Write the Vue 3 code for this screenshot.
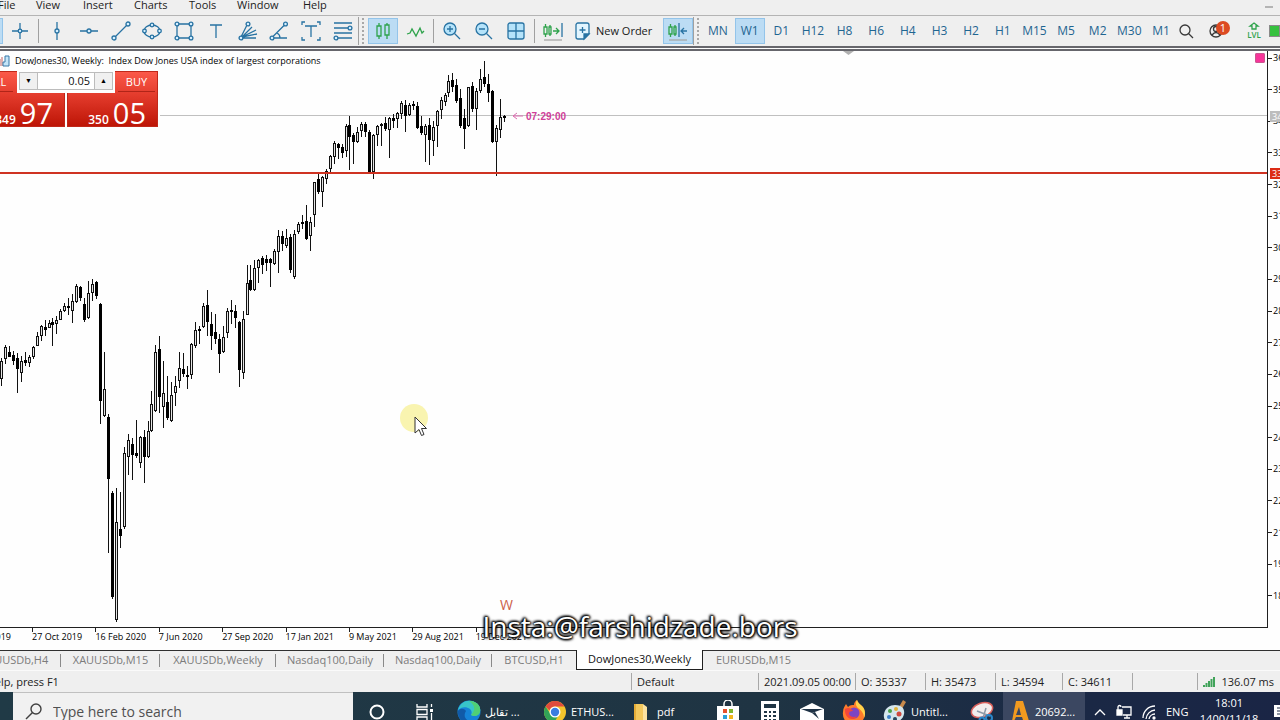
<template>
  <div class="terminal">
    <nav class="menubar">
      <button class="menu-item" v-for="item in menu" :key="item.name" :style="{ width: item.width + 'px' }">{{ item.name }}</button>
      <button class="minimize" aria-label="Minimize"></button>
    </nav>

    <div class="toolbar">
      <div class="group group-pointer">
        <button class="tool active" aria-label="Cursor"></button>
        <button class="tool" aria-label="Crosshair">
          <svg width="20" height="20" viewBox="0 0 20 20"><path d="M10 2v16M2 10h16" /><circle cx="10" cy="10" r="1.8" /></svg>
        </button>
      </div>
      <div class="sep"></div>
      <div class="group group-objects">
        <button class="tool" aria-label="Vertical line">
          <svg width="20" height="20" viewBox="0 0 20 20"><path d="M10 1v7M10 12v7" /><circle cx="10" cy="10" r="2" /></svg>
        </button>
        <button class="tool" aria-label="Horizontal line">
          <svg width="20" height="20" viewBox="0 0 20 20"><path d="M1 10h7M12 10h7" /><circle cx="10" cy="10" r="2" /></svg>
        </button>
        <button class="tool" aria-label="Trend line">
          <svg width="20" height="20" viewBox="0 0 20 20"><path d="M4.5 15.5l11-11" /><circle cx="3" cy="17" r="2" /><circle cx="17" cy="3" r="2" /></svg>
        </button>
        <button class="tool" aria-label="Ellipse">
          <svg width="20" height="20" viewBox="0 0 20 20"><ellipse cx="10" cy="10" rx="8" ry="6" /><circle cx="10" cy="4" r="1.8" /><circle cx="10" cy="16" r="1.8" /><circle cx="2.5" cy="10" r="1.8" /><circle cx="17.5" cy="10" r="1.8" /></svg>
        </button>
        <button class="tool" aria-label="Rectangle">
          <svg width="20" height="20" viewBox="0 0 20 20"><path d="M3 3h14v14H3z" /><circle cx="3" cy="3" r="1.9" /><circle cx="17" cy="3" r="1.9" /><circle cx="3" cy="17" r="1.9" /><circle cx="17" cy="17" r="1.9" /></svg>
        </button>
        <button class="tool" aria-label="Text">
          <svg width="20" height="20" viewBox="0 0 20 20"><path d="M4 4h12M10 4v13" /></svg>
        </button>
        <button class="tool" aria-label="Gann fan">
          <svg width="20" height="20" viewBox="0 0 20 20"><path d="M3 16L9 4M4 16L14 6M4 16L18 9M4 16l15-3M4 17h14" /><circle cx="10" cy="3" r="1.9" /><circle cx="3" cy="17" r="1.9" /></svg>
        </button>
        <button class="tool" aria-label="Angle">
          <svg width="20" height="20" viewBox="0 0 20 20"><path d="M4 15.5L15 4.5M5 17h13M8 12q3 1.5 3 5" /><circle cx="16.5" cy="3" r="1.9" /><circle cx="3" cy="17" r="1.9" /></svg>
        </button>
        <button class="tool" aria-label="Text label">
          <svg width="20" height="20" viewBox="0 0 20 20"><path d="M4 5h12M10 5v11M1 4V1h3M16 1h3v3M1 16v3h3M16 19h3v-3" /></svg>
        </button>
        <button class="tool" aria-label="Fibonacci">
          <svg width="20" height="20" viewBox="0 0 20 20"><path d="M1 2h18M1 7h14M1 12h18M5 17h14" /><circle cx="17" cy="7" r="1.9" /><circle cx="3" cy="17" r="1.9" /></svg>
        </button>
      </div>
      <div class="divider"></div>
      <div class="group group-pair">
        <button class="tool active green" aria-label="Candlesticks">
          <svg width="20" height="20" viewBox="0 0 20 20"><path d="M4 5h4v10H4zM6 2v3M6 15v3M12 4h4v10h-4zM14 2v2M14 14v4" /></svg>
        </button>
        <button class="tool green" aria-label="Line chart">
          <svg width="20" height="20" viewBox="0 0 20 20"><path d="M2 13l3-1 2-4 4 7 4-8 2 5 2-2" /></svg>
        </button>
      </div>
      <div class="sep"></div>
      <div class="group group-zoom">
        <button class="tool" aria-label="Zoom in">
          <svg width="20" height="20" viewBox="0 0 20 20"><circle cx="8" cy="8" r="6" class="lens" /><path d="M12.5 12.5L18 18M5 8h6M8 5v6" /></svg>
        </button>
        <button class="tool" aria-label="Zoom out">
          <svg width="20" height="20" viewBox="0 0 20 20"><circle cx="8" cy="8" r="6" class="lens" /><path d="M12.5 12.5L18 18M5 8h6" /></svg>
        </button>
        <button class="tool" aria-label="Tile windows">
          <svg width="20" height="20" viewBox="0 0 20 20"><rect x="2" y="2" width="16" height="16" rx="2" class="lens" /><path d="M10 2v16M2 10h16" /></svg>
        </button>
      </div>
      <div class="sep"></div>
      <button class="tool green" aria-label="Auto scroll">
        <svg width="20" height="20" viewBox="0 0 20 20"><path d="M1 6h3v7H1zM2.5 3v3M2.5 13v3M6 6h2v7H6zM7 4v2M7 13v2M10 10h6M13 7l3 3-3 3" /><path class="blue" d="M19 2v14" /><path class="grey" d="M1 19h18" /></svg>
      </button>
      <button class="new-order">
        <svg width="20" height="20" viewBox="0 0 20 20"><path class="paper" d="M5 2h9a2 2 0 0 1 2 2v9l-5 5H5a2 2 0 0 1-2-2V4a2 2 0 0 1 2-2z" /><path class="fold" d="M11 18v-5h5z" /><path d="M9.5 6v6M6.5 9h6" /></svg>
        New Order
      </button>
      <button class="tool active green" aria-label="Chart shift">
        <svg width="20" height="20" viewBox="0 0 20 20"><path d="M1 6h3v7H1zM2.5 3v3M2.5 13v3M6 6h2v7H6zM7 4v2M7 13v2" /><path class="blue" d="M11 2v14M13 10h6M16 7l-3 3 3 3" /><path class="grey" d="M1 19h18" /></svg>
      </button>
      <div class="divider"></div>
      <div class="group group-frames">
        <button class="tool frame" v-for="tf in frames" :key="tf" :class="{ active: tf === frame }" @click="frame = tf">{{ tf }}</button>
      </div>
      <div class="extras">
        <button class="extra dark" aria-label="Search">
          <svg width="20" height="20" viewBox="0 0 20 20"><circle cx="9" cy="9" r="5" /><path d="M12.5 12.5L17 17" /></svg>
        </button>
        <button class="extra dark account" aria-label="Account">
          <svg width="20" height="20" viewBox="0 0 20 20"><circle cx="8" cy="10" r="6" /><circle cx="8" cy="8" r="2.5" /><path d="M4 14q4-5 8 0" /></svg>
          <span class="badge">1</span>
        </button>
        <button class="extra lvl" aria-label="Level">
          <svg width="14" height="8" viewBox="0 0 14 8"><path d="M7 1l4 3H9v3H5V4H3z" /></svg>
          <span>LVL</span>
        </button>
        <span class="battery"></span>
      </div>
    </div>

    <div class="workspace">
      <div class="plot">
        <svg class="chart" width="100%" height="100%">
          <line x1="160" y1="64.5" x2="100%" y2="64.5" class="bid" />
          <g v-for="(c, i) in candles" :key="i">
            <line :x1="candleX(i)" :x2="candleX(i)" :y1="c[0] - 51" :y2="c[3] - 51" class="wick" />
            <rect :x="candleX(i) - 1" :y="c[1] - 51 + 0.5" width="2" :height="Math.max(c[2] - c[1] - 1, 1)" :class="c[4] ? 'bear' : 'bull'" />
          </g>
          <line x1="0" y1="122" x2="100%" y2="122" class="level" />
          <path d="M513 65h10M517 62l-4 3 4 3" class="arrow" />
          <text x="526" y="69" class="timer">07:29:00</text>
          <text x="500" y="559" class="period">W</text>
          <path d="M843 0h11l-5.5 4z" class="shift-mark" />
          <circle cx="414" cy="367" r="14" class="halo" />
          <path d="M415 366v16l4-3.5 2.5 6 2.5-1-2.5-6h5z" class="pointer" />
        </svg>
        <div class="caption">
          <svg width="12" height="12" viewBox="0 0 12 12"><path d="M-3 11V4h4v7zM3 11V2" fill="#f8e0e0" stroke="#c06060" /><path d="M4 11V7h2V1h4v10z" fill="#c4e5f8" stroke="#3878a8" /></svg>
          DowJones30, Weekly:&nbsp; Index Dow Jones USA index of largest corporations
        </div>
        <span class="marker"></span>
        <div class="trade">
          <button class="deal sell">
            <span class="side">SELL</span>
            <span class="quote"><small>349</small>97</span>
          </button>
          <button class="deal">
            <span class="side">BUY</span>
            <span class="quote"><small>350</small>05</span>
          </button>
          <div class="stepper">
            <button class="step" aria-label="Decrease volume" @click="stepVolume(-1)">▼</button>
            <input v-model="volume" aria-label="Volume">
            <button class="step" aria-label="Increase volume" @click="stepVolume(1)">▲</button>
          </div>
        </div>
      </div>
      <div class="prices">
        <span class="price" v-for="p in prices" :key="p">{{ p }}</span>
        <span class="price-tag tag-bid">34</span>
        <span class="price-tag tag-level">33</span>
      </div>
    </div>

    <div class="dates">
      <span class="first-date">2019</span>
      <div class="date-row">
        <span class="date" v-for="d in dates" :key="d">{{ d }}</span>
      </div>
      <div class="watermark">Insta:@farshidzade.bors</div>
    </div>

    <div class="tabs">
      <button class="tab" v-for="(tab, i) in tabs" :key="i" :class="{ current: tab.name === current, plain: tab.plain }"
        :style="{ width: tab.width + 'px' }" @click="current = tab.name">{{ tab.name }}</button>
    </div>

    <footer class="status">
      <span class="help">For Help, press F1</span>
      <span class="cell" v-for="(cell, i) in cells" :key="i" :style="{ width: cell.width + 'px' }">{{ cell.text }}</span>
      <span class="cell ping">
        <svg width="12" height="10" viewBox="0 0 12 10"><path d="M0 8h2v2H0zM2.5 6h2v4h-2zM5 4h2v6H5zM7.5 2h2v8h-2zM10 0h2v10h-2z" /></svg>
        136.07 ms
      </span>
    </footer>

    <div class="taskbar">
      <button class="start" aria-label="Start"></button>
      <label class="search">
        <svg width="20" height="20" viewBox="0 0 20 20"><circle cx="12" cy="7" r="5" /><path d="M8.5 10.5L2 17" /></svg>
        <input placeholder="Type here to search" aria-label="Type here to search">
      </label>
      <button class="task mid" aria-label="Cortana">
        <svg width="22" height="22" viewBox="0 0 22 22"><circle cx="11" cy="11" r="6.5" fill="none" stroke="#fff" stroke-width="2" /></svg>
      </button>
      <button class="task mid" aria-label="Task view">
        <svg width="22" height="22" viewBox="0 0 22 22"><path d="M3 3v3h10V3M3 19v-3h10v3M3 8.5h10v5H3zM17.5 3v3M17.5 12v7" fill="none" stroke="#fff" stroke-width="1.3" /><path d="M16 8h3v3h-3z" fill="#fff" /></svg>
      </button>
      <button class="task wide">
        <svg width="24" height="24" viewBox="0 0 24 24"><circle cx="12" cy="12" r="11.5" fill="#1683d8" /><path d="M1 10C3 3 9 0 14 1c7 1 10 6 9 11-1 4-6 5-9 3 1-2 1-4-1-6-4-3-9-2-12 1z" fill="#38c5c9" /><path d="M14 1c7 1 10 6 9 11-1 4-6 5-9 3 5-5 4-10-2-14z" fill="#50cf75" /><path d="M9 11c-3 4-1 9 5 11-8 2-14-4-13-11 2-3 6-3 8 0z" fill="#115aa8" /></svg>
        <span dir="ltr">تقابل ...</span>
      </button>
      <button class="task wide">
        <svg width="24" height="24" viewBox="0 0 24 24"><circle cx="12" cy="12" r="11" fill="#f2c42c" /><path d="M2.5 6.5A11 11 0 0 1 21.5 6.5H12a6 6 0 0 0-5.5 4z" fill="#df4b3c" /><path d="M2.5 6.5A11 11 0 0 0 11 23l4-7-6 0z" fill="#31a357" /><circle cx="12" cy="12" r="5.5" fill="#fff" /><circle cx="12" cy="12" r="4.2" fill="#3b7de0" /></svg>
        <span>ETHUS...</span>
      </button>
      <button class="task wide">
        <svg width="24" height="24" viewBox="0 0 24 24"><path d="M5 4h9v3h4v15H5z" fill="#f4c95d" /><path d="M14 4l4 3v15h-4z" fill="#fbe2a0" /><path d="M5 4h2v18H5z" fill="#e5ad38" /></svg>
        <span>pdf</span>
      </button>
      <button class="task" aria-label="Store">
        <svg width="24" height="24" viewBox="0 0 24 24"><path d="M8 6V4a4 4 0 0 1 8 0v2" fill="none" stroke="#fff" stroke-width="1.5" /><path d="M1 6h22v17H1z" fill="#fff" /><path d="M7 9h4v4H7z" fill="#e6512c" /><path d="M13 9h4v4h-4z" fill="#7db72f" /><path d="M7 15h4v4H7z" fill="#2a9fd8" /><path d="M13 15h4v4h-4z" fill="#f3b61f" /></svg>
      </button>
      <button class="task" aria-label="Calculator">
        <svg width="24" height="24" viewBox="0 0 24 24"><path d="M3 1h18v22H3z" fill="#fff" /><path d="M6 4h12v4H6zM6 11h3v2H6zM11 11h2v2h-2zM15 11h3v2h-3zM6 15h3v2H6zM11 15h2v2h-2zM15 15h3v2h-3zM6 19h3v2H6zM11 19h2v2h-2zM15 19h3v2h-3z" fill="#1f3444" /></svg>
      </button>
      <button class="task" aria-label="Mail">
        <svg width="24" height="24" viewBox="0 0 24 24"><path d="M0 9l12-6 12 6v13H0z" fill="#fff" /><path d="M1 9h22l-11 4z" fill="#1e3245" /><path d="M12 13l7 6-4-7z" fill="#1e3245" /></svg>
      </button>
      <button class="task" aria-label="Firefox">
        <svg width="24" height="24" viewBox="0 0 24 24"><path d="M1 12C1 8 3 6 4 4l2 3c2-2 4-2 6-2 0-2 1-4 3-5 1 3 3 4 5 6 3 3 4 8 2 12a11 11 0 0 1-21-6z" fill="#ff7b2b" /><path d="M15 0c1 3 3 4 5 6 3 3 4 8 2 12 0-5-3-8-6-10-2-2-3-5-1-8z" fill="#ffd34a" /><circle cx="12" cy="13" r="5.5" fill="#7c45c4" /><path d="M3 9c3-2 6-1 8 2-3 0-4 1-4 3 1 3 5 4 8 2-3 6-13 3-12-7z" fill="#f2463c" /></svg>
      </button>
      <button class="task wide">
        <svg width="24" height="24" viewBox="0 0 24 24"><path d="M13 12l7-12 3 2-7 12z" fill="#c98a4b" /><path d="M12 5c7 0 10 4 9 9-1 6-7 9-13 9-5 0-8-4-7-9 1-6 6-9 11-9z" fill="#d5e6ec" /><circle cx="7" cy="11" r="2" fill="#49a14a" /><circle cx="13" cy="9" r="2" fill="#e2b43c" /><circle cx="6" cy="17" r="2" fill="#3c7fc8" /><circle cx="16" cy="14" r="2.5" fill="#d0493e" /><circle cx="12" cy="19" r="2" fill="#25465c" /></svg>
        <span>Untitl...</span>
      </button>
      <button class="task" aria-label="Snipping tool">
        <svg width="24" height="24" viewBox="0 0 24 24"><ellipse cx="12" cy="10" rx="11" ry="7" transform="rotate(-20 12 10)" fill="#f3eeee" stroke="#d8605c" stroke-width="1.5" /><path d="M7 11l13 5M16 8l-3 10" stroke="#8d9aa8" stroke-width="1.5" /><circle cx="19" cy="18" r="3" fill="none" stroke="#2b86c9" stroke-width="2" /><circle cx="12" cy="20" r="2.5" fill="none" stroke="#2b86c9" stroke-width="2" /></svg>
      </button>
      <button class="task wide open">
        <svg width="24" height="24" viewBox="0 0 24 24"><path d="M8 1h7l6 20h3v2h-8l-2-6H8l-2 4 3 2H1l2-2h1zM11 7l-3 8h5z" fill="#f29a1f" /></svg>
        <span>20692...</span>
      </button>
      <div class="tray">
        <svg width="12" height="8" viewBox="0 0 12 8"><path d="M1 7l5-5 5 5" /></svg>
        <svg width="16" height="16" viewBox="0 0 16 16"><path d="M6 3h9v8H7M11 11v3M8 14h6" /><path d="M1 6h5v5H1z" fill="#fff" /><path d="M2 6V3a1.5 1.5 0 0 1 3 0" /></svg>
        <svg width="14" height="16" viewBox="0 0 14 16"><path d="M1 14A12 12 0 0 1 13 2M4 15A10 10 0 0 1 13 6M7 15a6 6 0 0 1 6-5" /><circle cx="12" cy="14" r="1" fill="#fff" /></svg>
        <span>ENG</span>
      </div>
      <div class="clock">
        <span>18:01</span>
        <span>1400/11/18</span>
      </div>
      <button class="notify" aria-label="Notifications">
        <svg width="16" height="16" viewBox="0 0 16 16"><path d="M1 1h14v12H1z" fill="#fff" /><path d="M4 4h8M4 7h8M4 10h8" stroke="#1b2944" /></svg>
      </button>
    </div>
  </div>
</template>

<script setup>
import { ref } from 'vue'

const frame = ref('W1')
const volume = ref('0.05')
const current = ref('DowJones30,Weekly')

const menu = [
  { name: 'File', width: 38 },
  { name: 'View', width: 47 },
  { name: 'Insert', width: 51 },
  { name: 'Charts', width: 55 },
  { name: 'Tools', width: 48 },
  { name: 'Window', width: 66 },
  { name: 'Help', width: 40 }
]

const frames = ['MN', 'W1', 'D1', 'H12', 'H8', 'H6', 'H4', 'H3', 'H2', 'H1', 'M15', 'M5', 'M2', 'M30', 'M1']
const prices = [36, 35, 34, 33, 32, 31, 30, 29, 28, 27, 26, 25, 24, 23, 22, 21, 19, 18]
const dates = ['27 Oct 2019', '16 Feb 2020', '7 Jun 2020', '27 Sep 2020', '17 Jan 2021', '9 May 2021', '29 Aug 2021', '19 Dec 2021']

const tabs = [
  { name: 'XAUUSDb,H4', width: 93 },
  { name: 'XAUUSDb,M15', width: 99 },
  { name: 'XAUUSDb,Weekly', width: 116 },
  { name: 'Nasdaq100,Daily', width: 108 },
  { name: 'Nasdaq100,Daily', width: 108 },
  { name: 'BTCUSD,H1', width: 84, plain: true },
  { name: 'DowJones30,Weekly', width: 127 },
  { name: 'EURUSDb,M15', width: 101, plain: true }
]

const cells = [
  { text: 'Default', width: 127 },
  { text: '2021.09.05 00:00', width: 97 },
  { text: 'O: 35337', width: 70 },
  { text: 'H: 35473', width: 70 },
  { text: 'L: 34594', width: 67 },
  { text: 'C: 34611', width: 70 },
  { text: '', width: 65 }
]

// high, body top, body bottom, low, 1 = falling week
const candles = [
  [358, 361, 379, 386, 0], [345, 347, 359, 364, 0], [346, 352, 357, 357, 1], [351, 355, 361, 365, 1],
  [353, 358, 369, 393, 1], [356, 361, 373, 382, 0], [352, 360, 363, 366, 1], [355, 357, 363, 367, 0],
  [346, 347, 357, 359, 0], [332, 336, 346, 346, 0], [325, 326, 336, 341, 0], [320, 327, 330, 336, 1],
  [320, 323, 328, 328, 0], [318, 322, 325, 346, 1], [316, 320, 324, 334, 0], [309, 311, 320, 320, 0],
  [303, 306, 311, 312, 0], [298, 306, 307, 315, 1], [294, 301, 311, 323, 0], [284, 286, 302, 303, 0],
  [286, 287, 298, 301, 1], [298, 304, 320, 322, 1], [281, 293, 318, 319, 0], [279, 284, 293, 301, 0],
  [281, 282, 296, 299, 1], [303, 304, 401, 424, 1], [352, 389, 416, 417, 0], [414, 417, 479, 553, 1],
  [491, 493, 597, 599, 1], [488, 522, 620, 622, 0], [492, 529, 536, 548, 1], [447, 453, 527, 529, 0],
  [434, 440, 457, 475, 0], [438, 444, 455, 480, 1], [420, 453, 456, 458, 1], [436, 437, 463, 468, 0],
  [430, 437, 457, 483, 1], [421, 431, 457, 458, 0], [391, 404, 431, 432, 0], [345, 352, 411, 412, 0],
  [336, 349, 397, 413, 1], [361, 393, 407, 428, 0], [376, 402, 418, 420, 1], [382, 395, 421, 422, 0],
  [376, 386, 393, 406, 0], [352, 368, 381, 388, 0], [353, 369, 374, 377, 1], [366, 375, 376, 389, 1],
  [343, 344, 375, 379, 0], [322, 330, 346, 348, 0], [326, 329, 330, 344, 1], [303, 306, 327, 328, 0],
  [290, 305, 322, 336, 1], [312, 324, 336, 350, 1], [314, 332, 339, 344, 1], [334, 339, 354, 373, 1],
  [326, 337, 352, 353, 0], [308, 311, 333, 338, 0], [300, 310, 311, 324, 1], [305, 311, 318, 328, 1],
  [321, 322, 370, 387, 1], [311, 319, 373, 379, 0], [265, 283, 315, 315, 0], [265, 280, 290, 291, 1],
  [260, 268, 290, 291, 0], [259, 260, 268, 283, 0], [256, 258, 265, 274, 1], [255, 259, 263, 271, 1],
  [258, 259, 263, 287, 1], [249, 251, 264, 265, 0], [230, 236, 252, 273, 0], [231, 236, 244, 251, 1],
  [229, 238, 246, 248, 0], [234, 237, 270, 273, 1], [230, 234, 277, 279, 0], [222, 224, 232, 234, 0],
  [215, 222, 223, 229, 1], [205, 221, 239, 240, 1], [217, 222, 236, 251, 0], [182, 182, 215, 227, 0],
  [174, 179, 192, 194, 1], [176, 177, 192, 207, 0], [169, 171, 179, 184, 0], [155, 156, 169, 172, 0],
  [141, 143, 157, 164, 0], [143, 144, 148, 159, 1], [144, 147, 153, 158, 1], [124, 126, 151, 157, 0],
  [116, 125, 137, 170, 1], [133, 135, 142, 164, 1], [127, 132, 142, 143, 0], [122, 124, 131, 137, 0],
  [122, 124, 132, 137, 1], [130, 132, 172, 173, 1], [134, 135, 172, 179, 0], [125, 126, 135, 146, 0],
  [123, 124, 126, 146, 0], [117, 123, 129, 131, 1], [117, 118, 130, 158, 0], [114, 118, 121, 128, 1],
  [112, 113, 119, 128, 0], [101, 103, 114, 119, 0], [100, 105, 116, 132, 1], [103, 105, 115, 116, 0],
  [101, 104, 106, 110, 1], [102, 106, 128, 129, 1], [116, 126, 133, 135, 1], [124, 126, 135, 162, 0],
  [118, 125, 140, 165, 1], [121, 127, 141, 156, 0], [110, 111, 126, 147, 0], [97, 100, 110, 119, 0],
  [93, 95, 102, 106, 0], [75, 81, 93, 97, 0], [73, 80, 87, 92, 1], [79, 85, 101, 103, 1],
  [89, 98, 126, 128, 1], [109, 118, 129, 149, 1], [87, 87, 126, 127, 0], [82, 86, 109, 112, 1],
  [88, 91, 109, 130, 0], [69, 79, 91, 93, 0], [61, 77, 84, 87, 1], [74, 84, 93, 102, 1],
  [90, 91, 142, 143, 1], [125, 128, 142, 176, 0], [99, 117, 130, 138, 0], [115, 116, 117, 122, 1]
]

function candleX(i) {
  return Math.round(1 + i * 3.96) + 0.5
}

function stepVolume(dir) {
  volume.value = Math.max(0.01, Number(volume.value) + dir * 0.01).toFixed(2)
}
</script>

<style>
body {
  margin: 0;
  background: #efefef;
}
</style>

<style scoped>
.terminal {
  display: flex;
  flex-direction: column;
  min-height: 100vh;
  overflow: hidden;
  background: #efefef;
  color: #1c1c1c;
  font-family: 'Open Sans', 'Noto Sans', sans-serif;
  font-size: 11px;
  line-height: 14px;
}

button {
  flex: none;
  border: none;
  padding: 0;
  background: none;
  color: inherit;
  font: inherit;
  white-space: nowrap;
}

svg {
  flex: none;
}

.menubar {
  display: flex;
  align-items: flex-start;
  height: 15px;
  border-bottom: 1px solid #b4b4b4;
  margin-left: -2px;
}

.menu-item {
  height: 10px;
  line-height: 10px;
  text-align: left;
}

.minimize {
  width: 8px;
  height: 2px;
  margin: 6px 7px 0 auto;
  background: #b4b4b4;
}

.toolbar {
  display: flex;
  align-items: center;
  height: 30px;
  margin-left: -27px;
  color: #1f6591;
}

.group {
  flex: none;
  display: flex;
  justify-content: space-between;
}

.group-pointer,
.group-pair {
  width: 62px;
}

.group-objects {
  width: 316px;
}

.group-zoom {
  width: 94px;
}

.group-frames {
  width: 473px;
}

.tool {
  display: flex;
  align-items: center;
  justify-content: center;
  width: 30px;
  height: 26px;
}

.tool.active {
  background: #bcdcf4;
  box-shadow: inset 0 0 0 1px #93c4ea;
}

.tool svg,
.new-order svg,
.extra svg {
  fill: none;
  stroke: #2873a3;
  stroke-width: 1.3;
}

.tool circle {
  fill: #d5efff;
}

.tool .lens {
  fill: #b5e3fa;
}

.tool.green svg {
  stroke: #2fa34c;
}

.tool .blue {
  stroke: #2873a3;
}

.tool .grey {
  stroke: #a8a8a8;
}

.frame {
  font-size: 12px;
}

.sep {
  flex: none;
  width: 1px;
  height: 24px;
  margin: 0 3px;
  background: #a0a0a0;
}

.divider {
  flex: none;
  width: 9px;
  height: 28px;
  border-left: 1px solid #a0a0a0;
  background: radial-gradient(circle at 1px 1px, #a8a8a8 1px, transparent 1px) 3px 1px / 3px 4px repeat-y;
}

.new-order {
  display: flex;
  align-items: center;
  gap: 3px;
  width: 95px;
  padding-left: 5px;
  color: #202020;
}

.new-order .paper {
  fill: #e2f5ff;
}

.new-order .fold {
  fill: #2873a3;
}

.extras {
  flex: 1;
  display: flex;
  align-items: center;
  min-width: 0;
}

.extra {
  position: relative;
}

.extra.dark svg {
  display: block;
  stroke: #383838;
}

.account {
  margin-left: 12px;
}

.badge {
  position: absolute;
  top: 0;
  left: 8px;
  width: 14px;
  height: 14px;
  border-radius: 7px;
  background: #dc4a22;
  color: #fff;
}

.lvl {
  display: flex;
  flex-direction: column;
  align-items: center;
  width: 20px;
  margin-left: 16px;
  color: #2fa34c;
  font-size: 8px;
  font-weight: 600;
  line-height: 10px;
}

.lvl svg {
  stroke: #2fa34c;
}

.battery {
  flex: 1;
  height: 12px;
  margin-left: 5px;
  background: #36c13f;
  box-shadow: inset 0 0 0 1px #8a8a8a;
}

.workspace {
  flex: 1;
  display: flex;
  min-height: 576px;
  border-top: 5px double #66666c;
  background: #fefefe;
  box-sizing: border-box;
}

.plot {
  position: relative;
  flex: 1;
  min-width: 0;
  border-right: 1px solid #202020;
  border-bottom: 1px solid #202020;
}

.chart {
  position: absolute;
  inset: 0;
}

.bid {
  stroke: #c0c0c0;
}

.wick {
  stroke: #111;
}

.bull {
  fill: #e4e4e4;
  stroke: #111;
}

.bear {
  fill: #000;
  stroke: #000;
}

.level {
  stroke: #cf3322;
  stroke-width: 2;
}

.arrow {
  fill: none;
  stroke: #dc6db0;
}

.timer {
  fill: #cf3f98;
  font: bold 10px 'Liberation Sans', sans-serif;
}

.period {
  fill: #cc6049;
  font-size: 14px;
}

.shift-mark {
  fill: #b0b0b0;
}

.halo {
  fill: #f9f4b0;
}

.pointer {
  fill: #fff;
  stroke: #333;
}

.caption {
  position: absolute;
  top: 4px;
  left: -1px;
  display: flex;
  align-items: center;
  gap: 4px;
  color: #000;
  font: 500 9px/12px 'Open Sans', sans-serif;
  white-space: nowrap;
}

.marker {
  position: absolute;
  top: 2px;
  right: 2px;
  width: 10px;
  height: 10px;
  border-radius: 2px;
  background: #f7349a;
  box-shadow: inset 0 0 0 1px #c9568f;
}

.trade {
  position: absolute;
  top: 20px;
  left: -26px;
  display: flex;
  gap: 2px;
}

.deal {
  display: flex;
  flex-direction: column;
  justify-content: space-between;
  width: 91px;
  height: 56px;
  background: linear-gradient(#fc5a4a, #e23a2b 45%, #bc1405);
  box-shadow: inset 0 0 0 1px #c0281a;
  color: #fff;
}

.side {
  align-self: flex-end;
  width: 37px;
  height: 20px;
  border-bottom: 1px solid #b02418;
  margin-right: 3px;
  line-height: 21px;
}

.sell .side {
  align-self: flex-start;
  margin-left: 2px;
}

.quote {
  align-self: flex-end;
  padding: 6px 12px 0 0;
  font-size: 29px;
  line-height: 29px;
}

.quote small {
  margin-right: 4px;
  font-size: 12px;
  font-weight: 600;
}

.stepper {
  position: absolute;
  top: 0;
  left: 43px;
  display: flex;
  width: 94px;
  height: 18px;
  padding: 1px 2px 3px;
  background: #fefefe;
}

.step {
  width: 19px;
  border: 1px solid #bcbcbc;
  background: #f0f0f0;
  color: #000;
  font-size: 7px;
}

.stepper input {
  flex: 1;
  min-width: 0;
  border: 1px solid #bcbcbc;
  border-width: 1px 0;
  padding: 0 4px;
  background: #fff;
  color: #111;
  font: inherit;
  text-align: right;
}

.prices {
  position: relative;
  display: flex;
  flex-direction: column;
  justify-content: space-between;
  width: 12px;
  padding: 1px 0 26px;
  overflow: hidden;
}

.price {
  display: flex;
  align-items: center;
  gap: 1px;
  color: #000;
  font: 500 9px/12px 'Open Sans', sans-serif;
}

.price::before {
  content: '';
  flex: none;
  width: 4px;
  height: 1px;
  background: #202020;
}

.price-tag {
  position: absolute;
  left: 2px;
  padding-left: 2px;
  color: #fff;
  font: 500 9px/11px 'Open Sans', sans-serif;
}

.tag-bid {
  top: 60px;
  background: #bdbdbd;
}

.tag-level {
  top: 117px;
  background: #dc2c16;
}

.dates {
  position: relative;
  display: flex;
  height: 22px;
  background: #fefefe;
  color: #000;
  font: 500 9px/12px 'Open Sans', sans-serif;
}

.first-date {
  display: flex;
  flex: none;
  justify-content: flex-end;
  width: 11px;
  margin-right: 21px;
  padding-top: 3px;
}

.date-row {
  display: grid;
  grid-template-columns: repeat(8, 1fr);
  width: 507px;
}

.date {
  position: relative;
  padding-top: 3px;
  white-space: nowrap;
}

.date::before {
  content: '';
  position: absolute;
  top: 0;
  left: 0;
  width: 1px;
  height: 4px;
  background: #202020;
}

.watermark {
  position: absolute;
  bottom: 7px;
  left: 0;
  right: 0;
  color: #fff;
  font: 28px/34px 'Open Sans', sans-serif;
  text-align: center;
  text-shadow: 0 0 2px #000, 0 0 2px #000, 0 0 3px #000, 0 0 3px #000, 1px 1px 3px #000, -1px -1px 3px #000;
}

.tabs {
  display: flex;
  height: 19px;
  border-top: 1px solid #303030;
  margin-left: -32px;
  color: #7c7c7c;
}

.tab {
  position: relative;
  padding-bottom: 2px;
}

.tab::after {
  content: '';
  position: absolute;
  top: 3px;
  right: 0;
  width: 1px;
  height: 13px;
  background: #8a8a8a;
}

.tab.plain::after,
.tab.current::after {
  content: none;
}

.tab.current {
  margin-top: -1px;
  border: 1px solid #202020;
  border-top: none;
  background: #fff;
  color: #111;
}

.status {
  display: flex;
  align-items: center;
  height: 21px;
  border-top: 1px solid #fafafa;
  color: #222;
}

.help {
  flex: 1;
  margin-left: -33px;
}

.cell {
  flex: none;
  height: 17px;
  border-left: 1px solid #a8a8a8;
  padding-left: 5px;
  line-height: 17px;
  box-sizing: border-box;
}

.ping {
  display: flex;
  align-items: center;
  justify-content: space-between;
  width: 83px;
  padding-right: 6px;
}

.ping svg {
  fill: #41a35a;
}

.taskbar {
  display: flex;
  align-items: flex-start;
  height: 28px;
  overflow: hidden;
  background: linear-gradient(90deg, #203a46, #1f3443 60%, #1a2845 85%, #1a2545);
  color: #fff;
}

.start {
  width: 13px;
  height: 40px;
}

.search {
  flex: none;
  display: flex;
  align-items: center;
  gap: 9px;
  width: 329px;
  height: 40px;
  padding-left: 11px;
  background: #f1f1f1;
  box-shadow: inset 0 1px 0 #c0c0c0;
}

.search svg {
  fill: none;
  stroke: #404040;
  stroke-width: 1.4;
}

.search input {
  flex: 1;
  min-width: 0;
  border: none;
  outline: none;
  padding: 0;
  background: none;
  font: 14px/20px 'Open Sans', sans-serif;
}

.search input::placeholder {
  color: #505050;
  opacity: 1;
}

.task {
  display: flex;
  align-items: center;
  justify-content: center;
  width: 42px;
  height: 40px;
}

.task.mid {
  width: 48px;
}

.task.wide {
  justify-content: flex-start;
  gap: 4px;
  width: 86px;
  padding-left: 8px;
}

.task.open {
  gap: 3px;
  width: 82px;
  padding-left: 5px;
  background: #3b4761;
}

.tray {
  flex: 1;
  display: flex;
  align-items: center;
  gap: 10px;
  height: 40px;
  padding-left: 9px;
}

.tray svg {
  fill: none;
  stroke: #fff;
  stroke-width: 1.3;
}

.clock {
  display: flex;
  flex-direction: column;
  align-items: center;
  width: 64px;
  padding-top: 3px;
  line-height: 16px;
}

.notify {
  display: flex;
  align-items: center;
  width: 7px;
  height: 40px;
  margin-left: 12px;
  overflow: hidden;
}
</style>
